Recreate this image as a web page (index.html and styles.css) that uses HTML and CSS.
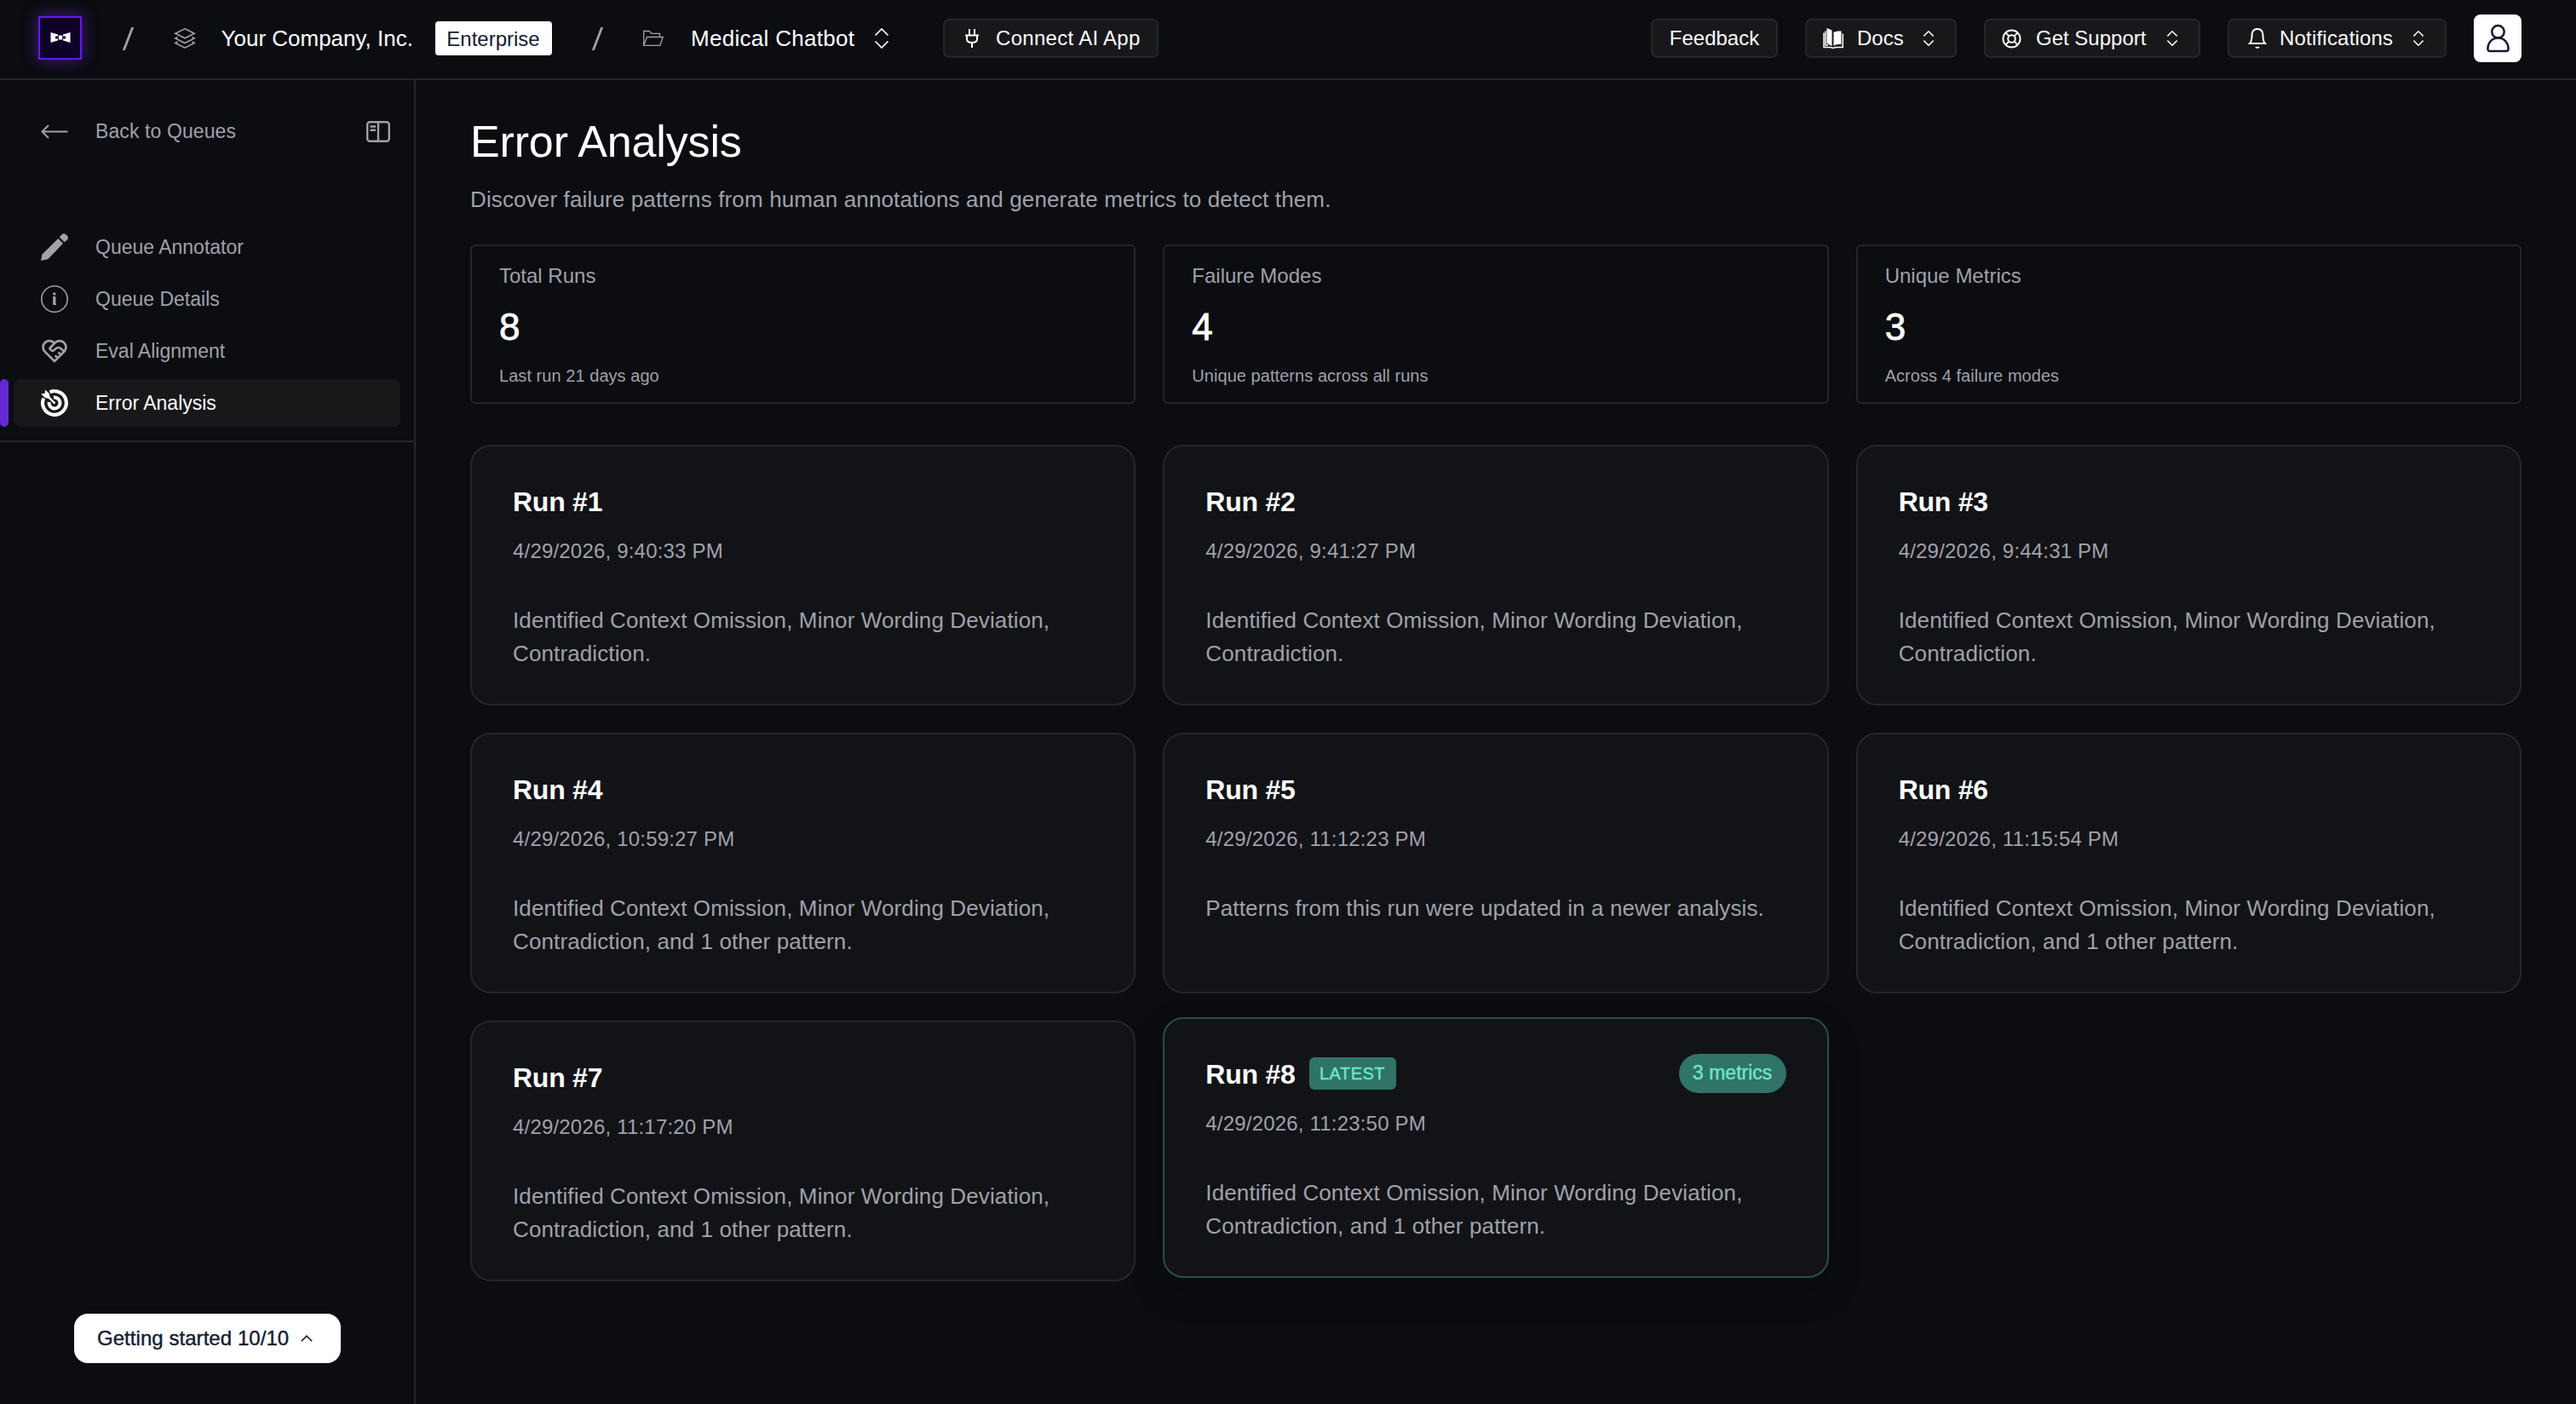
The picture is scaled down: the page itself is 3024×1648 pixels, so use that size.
FILE: index.html
```html
<!DOCTYPE html>
<html lang="en">
<head>
<meta charset="utf-8">
<title>Error Analysis</title>
<link rel="stylesheet" href="styles.css">
</head>
<body>
<svg class="defs" aria-hidden="true">
  <symbol id="updown" viewBox="0 0 24 24"><path d="M4.500 8.500 12 1l7.500 7.500M4.500 15.500 12 23l7.500-7.500"/></symbol>
</svg>
<header class="topbar">
  <div class="crumbs">
    <span class="logo"><svg viewBox="0 0 24 12"><path d="M.5 0 9 2.500V4.500H6v3h3v2L.5 12zM23.500 0 15 2.500V4.500h3v3h-3v2l8.500 2.500z"/><rect x="9.800" y="3.500" width="4.400" height="5"/></svg></span>
    <span class="slash"></span>
    <svg class="icon layers" viewBox="0 0 24 24"><path d="M12 .8 23.200 6.300 12 11.800.8 6.300zM3.500 10.500.8 12 12 17.500 23.200 12l-2.700-1.500M3.500 16 .8 17.500 12 23.200l11.200-5.700L20.500 16"/></svg>
    <span class="org">Your Company, Inc.</span>
    <span class="plan">Enterprise</span>
    <span class="slash second"></span>
    <svg class="icon folder" viewBox="0 0 24 20"><path d="M.7 18.300V1.500h6.500l2.500 2.800h9.800v4M.7 18.300 4.500 8.500h18.800l-3.500 9.800z"/></svg>
    <span class="project">Medical Chatbot</span>
    <svg class="icon updown big"><use href="#updown"/></svg>
    <button class="btn connect"><svg class="icon plug" viewBox="0 0 16 22"><path d="M5 0v6.500M11 0v6.500M0 7.500h16M2 7.500V12c0 3 2 4 6 4s6-1 6-4V7.500M8 16v6"/></svg>Connect AI App</button>
  </div>
  <div class="actions">
    <button class="btn feedback">Feedback</button>
    <button class="btn docs"><svg class="icon book" viewBox="0 0 24 24"><path class="fill" d="M4.500 0 10.500 2.500V21L4.500 18zM12.500 5c2-1.500 5-1.500 9-1.500V19c-4 0-7 0-9 2z"/><path d="M1 5.500V22.500h8l3 1 3-1h8.300V6.500M3 3.500V20h3"/></svg>Docs<svg class="icon updown"><use href="#updown"/></svg></button>
    <button class="btn support"><svg class="icon buoy" viewBox="0 0 24 24"><circle cx="12" cy="12" r="10.500"/><circle cx="12" cy="12" r="4.500"/><path d="m4.600 4.600 4.200 4.200M15.200 15.200l4.200 4.200M19.400 4.600l-4.200 4.200M8.800 15.200l-4.200 4.200"/></svg>Get Support<svg class="icon updown"><use href="#updown"/></svg></button>
    <button class="btn notif"><svg class="icon bell" viewBox="0 0 20 24"><path d="M1 18c2-2 2.500-5 2.500-9 0-5 2.500-8 6.500-8s6.500 3 6.500 8c0 4 .5 7 2.500 9zM8 22c1 1.300 3 1.300 4 0"/></svg>Notifications<svg class="icon updown"><use href="#updown"/></svg></button>
    <span class="avatar"><svg viewBox="0 0 28 34"><circle cx="14" cy="9" r="7.500"/><path d="M4 32.500c-1.500 0-2.500-1-2.500-2.500C1.500 22 7 16.500 14 16.500S26.500 22 26.500 30c0 1.500-1 2.500-2.500 2.500z"/></svg></span>
  </div>
</header>
<div class="shell">
  <aside class="sidebar">
    <div class="back">
      <svg class="icon arrow" viewBox="0 0 32 17"><path d="M31.500 8.500H1.500M9 1 1.500 8.500 9 16"/></svg>
      <span>Back to Queues</span>
      <svg class="icon panel" viewBox="0 0 28 25"><rect x="1.200" y="1.200" width="25.600" height="22.600" rx="3"/><path d="M14 1v23M4.500 6.500H11M4.500 10.800H11"/></svg>
    </div>
    <nav class="nav">
      <a class="item"><svg class="glyph" viewBox="0 0 32 32"><path class="fill" d="M20.200 6 26 11.800 11 27.500 8 30.300 0 32 1.500 24.500zM21.800 4.400 24.500 1.300C26 0 28 0 29.500 1.200L31 2.800c1.300 1.500 1.300 3.200 0 4.700l-3.300 2.800z"/></svg>Queue Annotator</a>
      <a class="item"><svg class="glyph" viewBox="0 0 32 32"><circle cx="16" cy="16" r="15.200" stroke-width="1.600"/><path class="fill" d="M14 13h3.400v8.500H18V23h-3.800v-8.500H14z"/><circle class="fill" cx="15.800" cy="10" r="1.700"/></svg>Queue Details</a>
      <a class="item"><svg class="glyph" viewBox="1.300 1.300 21.400 21.400"><path stroke-width="1.800" stroke-linejoin="round" d="M19.500 12.572 12 20l-7.500-7.428A5 5 0 1 1 12 6.006a5 5 0 1 1 7.500 6.572M12 6 8.707 9.293a1 1 0 0 0 0 1.414l.543.543c.69.69 1.810.690 2.500 0l1-1a3.182 3.182 0 0 1 4.500 0l2.250 2.250M12.500 15.500l2 2M15 13l2 2"/></svg>Eval Alignment</a>
      <a class="item active"><svg class="glyph" viewBox="0 0 32 32"><path stroke-width="4.200" d="M10.500 3.200A13.900 13.900 0 1 1 3.200 10.500"/><path stroke-width="4" d="M15 9.600A6.500 6.500 0 1 1 9.600 15"/><path class="fill" d="M5 .5 9.500 4.500 10.800 9.300 17.300 15.800 15.600 17.400 9.200 11 4.500 9.800.3 5.300 4.700 4.700z"/></svg>Error Analysis</a>
    </nav>
    <button class="started">Getting started 10/10 <svg class="icon up" viewBox="0 0 14 8"><path d="m.8 7.200 6.200-6 6.200 6"/></svg></button>
  </aside>
  <main class="main">
    <h1>Error Analysis</h1>
    <p class="lead">Discover failure patterns from human annotations and generate metrics to detect them.</p>
    <section class="grid stats">
      <div class="stat"><span class="label">Total Runs</span><strong>8</strong><small>Last run 21 days ago</small></div>
      <div class="stat"><span class="label">Failure Modes</span><strong>4</strong><small>Unique patterns across all runs</small></div>
      <div class="stat"><span class="label">Unique Metrics</span><strong>3</strong><small>Across 4 failure modes</small></div>
    </section>
    <section class="grid runs">
      <article class="card"><h2>Run #1</h2><time>4/29/2026, 9:40:33 PM</time><p>Identified Context Omission, Minor Wording Deviation,<br>Contradiction.</p></article>
      <article class="card"><h2>Run #2</h2><time>4/29/2026, 9:41:27 PM</time><p>Identified Context Omission, Minor Wording Deviation,<br>Contradiction.</p></article>
      <article class="card"><h2>Run #3</h2><time>4/29/2026, 9:44:31 PM</time><p>Identified Context Omission, Minor Wording Deviation,<br>Contradiction.</p></article>
      <article class="card"><h2>Run #4</h2><time>4/29/2026, 10:59:27 PM</time><p>Identified Context Omission, Minor Wording Deviation,<br>Contradiction, and 1 other pattern.</p></article>
      <article class="card"><h2>Run #5</h2><time>4/29/2026, 11:12:23 PM</time><p>Patterns from this run were updated in a newer analysis.</p></article>
      <article class="card"><h2>Run #6</h2><time>4/29/2026, 11:15:54 PM</time><p>Identified Context Omission, Minor Wording Deviation,<br>Contradiction, and 1 other pattern.</p></article>
      <article class="card"><h2>Run #7</h2><time>4/29/2026, 11:17:20 PM</time><p>Identified Context Omission, Minor Wording Deviation,<br>Contradiction, and 1 other pattern.</p></article>
      <article class="card latest"><h2>Run #8 <span class="tag">LATEST</span><span class="pill">3 metrics</span></h2><time>4/29/2026, 11:23:50 PM</time><p>Identified Context Omission, Minor Wording Deviation,<br>Contradiction, and 1 other pattern.</p></article>
    </section>
  </main>
</div>
</body>
</html>
```

FILE: styles.css
```css
* { box-sizing: border-box; }
body {
  margin: 0;
  height: 1648px;
  display: flex;
  flex-direction: column;
  overflow: hidden;
  background: #0b0d11;
  color: #fff;
  font-family: "Liberation Sans", Arial, sans-serif;
  font-size: 24px;
}
svg { fill: none; stroke: currentColor; stroke-width: 2; flex: none; display: block; overflow: visible; }
svg .fill { fill: currentColor; stroke: none; }
.defs { position: absolute; width: 0; height: 0; }
button { font: inherit; color: inherit; margin: 0; }

.topbar {
  height: 94px;
  flex: none;
  border-bottom: 2px solid #252628;
  display: flex;
  justify-content: space-between;
  padding: 0 64px 2px 45px;
}
.crumbs, .actions { display: flex; align-items: center; white-space: nowrap; }
.logo {
  width: 51px; height: 51px; margin-top: -2px;
  border: 2px solid #6419f0;
  background: #0e0226;
  box-shadow: 0 0 18px rgba(108, 34, 230, .6);
  display: grid; place-items: center;
}
.logo svg { width: 24px; height: 12px; fill: #fff; stroke: none; }
.slash { width: 2.500px; height: 27px; background: #a1a1aa; transform: skewX(-21deg); margin-left: 53px; }
.layers { width: 24px; height: 24px; margin-left: 53px; color: #a1a1aa; stroke-width: 1.600; }
.org { font-size: 26px; margin-left: 31px; width: 226px; padding-top: 1px; }
.plan {
  margin-left: 25px; width: 137px; height: 40px; border-radius: 4px;
  background: #fff; color: #141c33; font-size: 24px; line-height: 41px; text-align: center;
}
.slash.second { margin-left: 52px; }
.folder { width: 24px; height: 20px; margin-left: 53px; color: #a1a1aa; stroke-width: 1.300; }
.project { font-size: 26px; margin-left: 32px; width: 193px; letter-spacing: .3px; padding-top: 1px; }
.updown { width: 18px; height: 18px; stroke-width: 1.900; }
.updown.big { width: 24px; height: 24px; margin-left: 19px; stroke-width: 1.700; }
.btn {
  height: 46px; padding: 0; border: 2px solid #252628; border-radius: 7px;
  background: #18181a; display: flex; align-items: center; font-size: 24px;
}
.connect { width: 253px; margin-left: 60px; padding-left: 24px; letter-spacing: .3px; }
.plug { width: 16px; height: 22px; margin-right: 20px; }
.actions .btn { margin-right: 32px; }
.feedback { width: 149px; justify-content: center; }
.docs { width: 178px; padding-left: 19px; }
.book { width: 24px; height: 24px; margin-right: 16px; stroke-width: 1.500; }
.btn .updown { margin-left: auto; margin-right: 22px; }
.support { width: 254px; padding-left: 19px; }
.buoy { width: 23px; height: 23px; margin-right: 17px; }
.notif { width: 257px; padding-left: 23px; letter-spacing: .2px; }
.bell { width: 20px; height: 24px; margin-right: 16px; }
.avatar { width: 56px; height: 56px; background: #fff; border-radius: 8px; color: #141c33; display: grid; place-items: center; }
.avatar svg { width: 27px; height: 34px; stroke-width: 2.600; }

.shell { flex: 1; display: flex; min-height: 0; }
.sidebar { width: 488px; flex: none; border-right: 2px solid #252628; display: flex; flex-direction: column; color: #a1a1aa; }
.back { display: flex; align-items: center; height: 120px; padding: 0 28px 0 48px; font-size: 23px; letter-spacing: .1px; }
.arrow { width: 32px; height: 17px; margin-right: 32px; }
.panel { width: 28px; height: 25px; margin-left: auto; stroke-width: 2.400; }
.nav { display: flex; flex-direction: column; gap: 5px; padding: 48px 16px 16px; border-bottom: 2px solid #252628; }
.item { position: relative; height: 56px; border-radius: 8px; display: flex; align-items: center; padding-left: 32px; font-size: 23px; letter-spacing: 0; }
.glyph { width: 32px; height: 32px; margin-right: 32px; }
.item.active { background: #18181a; color: #fff; letter-spacing: 0; }
.item.active::before { content: ""; position: absolute; left: -16px; top: 0; width: 10px; height: 56px; border-radius: 5px; background: #6529d3; }
.started {
  margin: auto auto 48px 87px; width: 313px; height: 58px; border: 0; border-radius: 16px;
  background: #fff; color: #141c33; font-size: 24px; display: flex; align-items: center; padding: 0 0 0 27px; white-space: nowrap;
  letter-spacing: .05px; -webkit-text-stroke: .4px #141c33;
}
.started .up { width: 14px; height: 8px; margin-left: 14px; stroke-width: 1.600; }

.main { flex: 1; padding: 40px 64px 0; }
h1 { margin: 0; font-size: 52px; font-weight: 400; line-height: 64px; letter-spacing: -.15px; }
.lead { margin: 16px 0 0; font-size: 26px; line-height: 40px; color: #a1a1aa; letter-spacing: .14px; }
.grid { display: grid; grid-template-columns: repeat(3, 1fr); column-gap: 32px; }
.stats { margin-top: 33px; }
.stat { height: 187px; border: 2px solid #252628; border-radius: 6px; padding: 19px 32px; display: flex; flex-direction: column; color: #a1a1aa; }
.stat .label { font-size: 24px; line-height: 32px; }
.stat strong { font-size: 44px; font-weight: 500; line-height: 48px; margin-top: 20px; color: #fff; -webkit-text-stroke: .8px #fff; }
.stat small { font-size: 20px; line-height: 28px; margin-top: 19px; letter-spacing: .05px; }
.runs { margin-top: 48px; row-gap: 32px; }
.card { height: 306px; border: 2px solid #252628; border-radius: 24px; background: #121317; padding: 43px 48px; color: #a1a1aa; }
.card h2 { margin: 0; height: 44px; font-size: 32px; line-height: 44px; color: #fff; display: flex; align-items: center; letter-spacing: -.25px; }
.card time { display: block; margin-top: 20px; font-size: 24px; line-height: 32px; letter-spacing: .19px; }
.card p { margin: 46px 0 0; font-size: 26px; line-height: 39px; white-space: nowrap; letter-spacing: .12px; }
.card.latest { transform: translateY(-4px); border-color: #245046; box-shadow: 0 16px 40px rgba(0, 0, 0, .2); }
.tag { margin: -2px 0 0 16px; width: 102px; height: 38px; border-radius: 6px; background: #307367; color: #6fe5cc; font-size: 20px; font-weight: 400; line-height: 39px; text-align: center; letter-spacing: .5px; -webkit-text-stroke: .4px #6fe5cc; }
.pill { margin: -2px 0 0 auto; width: 126px; height: 46px; border-radius: 23px; background: #307367; color: #6fe5cc; font-size: 23px; font-weight: 400; line-height: 45px; text-align: center; letter-spacing: 0; -webkit-text-stroke: .4px #6fe5cc; }
```
